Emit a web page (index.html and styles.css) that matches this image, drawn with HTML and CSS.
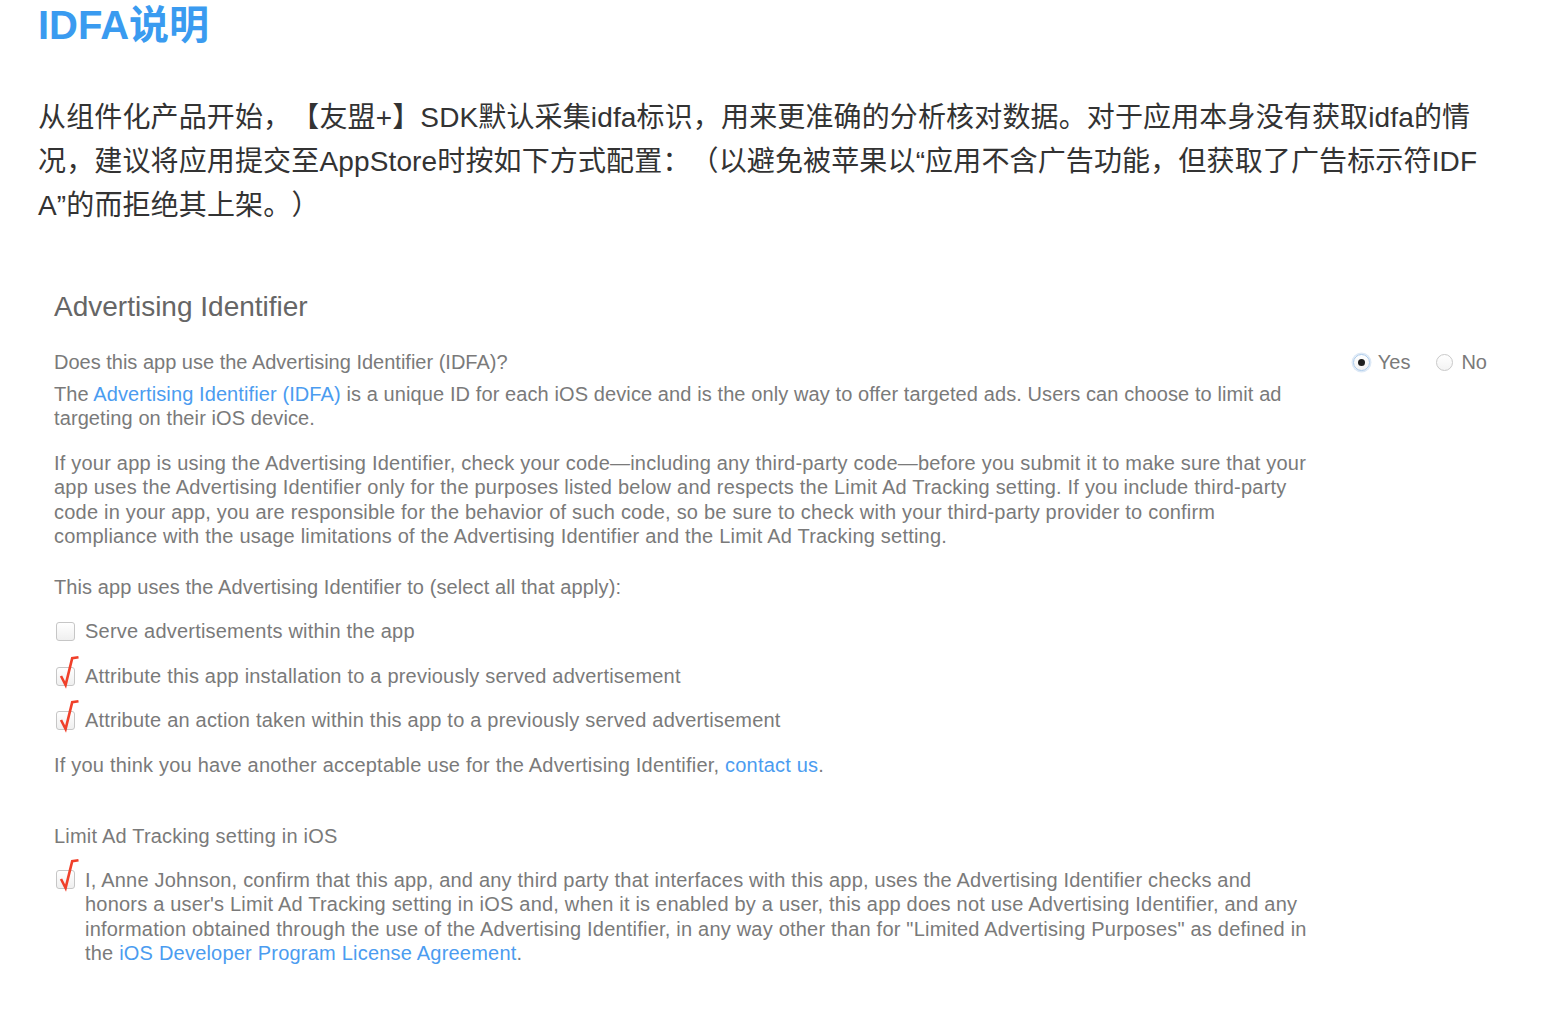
FILE: index.html
```html
<!DOCTYPE html>
<html lang="zh-CN">
<head>
<meta charset="utf-8">
<title>IDFA说明</title>
<link rel="stylesheet" href="styles.css">
</head>
<body>
<div class="page">
  <h1 class="title">IDFA说明</h1>
  <p class="intro">从组件化产品开始，【友盟+】SDK默认采集idfa标识，用来更准确的分析核对数据。对于应用本身没有获取idfa的情<br>况，建议将应用提交至AppStore时按如下方式配置：（以避免被苹果以“应用不含广告功能，但获取了广告标示符IDF<br>A”的而拒绝其上架。）</p>

  <div class="shot">
    <h2 class="shot-title">Advertising Identifier</h2>

    <div class="question-row">
      <div class="line question">Does this app use the Advertising Identifier (IDFA)?</div>
      <div class="radios">
        <span class="radio radio-on"><span class="dot"></span></span>
        <span class="radio-label">Yes</span>
        <span class="radio radio-off"></span>
        <span class="radio-label">No</span>
      </div>
    </div>

    <div class="block desc">The <span class="link">Advertising Identifier (IDFA)</span> is a unique ID for each iOS device and is the only way to offer targeted ads. Users can choose to limit ad<br>targeting on their iOS device.</div>

    <div class="block para2">If your app is using the Advertising Identifier, check your code—including any third-party code—before you submit it to make sure that your<br>app uses the Advertising Identifier only for the purposes listed below and respects the Limit Ad Tracking setting. If you include third-party<br>code in your app, you are responsible for the behavior of such code, so be sure to check with your third-party provider to confirm<br>compliance with the usage limitations of the Advertising Identifier and the Limit Ad Tracking setting.</div>

    <div class="line select">This app uses the Advertising Identifier to (select all that apply):</div>

    <div class="check-row row1">
      <span class="box"></span>
      <span class="check-text">Serve advertisements within the app</span>
    </div>
    <div class="check-row row2">
      <span class="box"><svg class="tick" viewBox="0 0 24 34" width="24" height="34"><path d="M4 22 L8.6 31 L15.2 4.2 L21.5 3.2"/></svg></span>
      <span class="check-text">Attribute this app installation to a previously served advertisement</span>
    </div>
    <div class="check-row row3">
      <span class="box"><svg class="tick" viewBox="0 0 24 34" width="24" height="34"><path d="M4 22 L8.6 31 L15.2 4.2 L21.5 3.2"/></svg></span>
      <span class="check-text">Attribute an action taken within this app to a previously served advertisement</span>
    </div>

    <div class="line other">If you think you have another acceptable use for the Advertising Identifier, <span class="link">contact us</span>.</div>

    <div class="line limit">Limit Ad Tracking setting in iOS</div>

    <div class="check-row confirm">
      <span class="box"><svg class="tick" viewBox="0 0 24 34" width="24" height="34"><path d="M4 22 L8.6 31 L15.2 4.2 L21.5 3.2"/></svg></span>
      <span class="check-text multi">I, Anne Johnson, confirm that this app, and any third party that interfaces with this app, uses the Advertising Identifier checks and<br>honors a user's Limit Ad Tracking setting in iOS and, when it is enabled by a user, this app does not use Advertising Identifier, and any<br>information obtained through the use of the Advertising Identifier, in any way other than for "Limited Advertising Purposes" as defined in<br>the <span class="link">iOS Developer Program License Agreement</span>.</span>
    </div>
  </div>
</div>
</body>
</html>
```

FILE: styles.css
```css
html, body {
  margin: 0;
  padding: 0;
  background: #ffffff;
}

.page {
  padding: 0 38px;
  font-family: "Liberation Sans", "Noto Sans CJK SC", sans-serif;
}

.title {
  margin: 0;
  font-size: 40px;
  line-height: 50px;
  font-weight: bold;
  color: #3a9bf0;
  white-space: nowrap;
}

.intro {
  margin: 46px 0 0;
  font-size: 28px;
  line-height: 44px;
  color: #333333;
  letter-spacing: 0.14px;
  white-space: nowrap;
  text-spacing-trim: space-all;
}

.shot {
  padding: 0 16px;
  color: #7a7a7a;
  font-size: 20px;
  line-height: 24px;
  letter-spacing: 0.21px;
  white-space: nowrap;
}

.shot-title {
  margin: 63px 0 0;
  font-size: 28px;
  line-height: 32px;
  font-weight: normal;
  color: #666666;
  letter-spacing: 0;
}

.question {
  letter-spacing: 0;
}

.link {
  color: #4b9cf0;
}

.question-row {
  margin-top: 27px;
  display: flex;
  align-items: center;
  justify-content: space-between;
}

.radios {
  display: flex;
  align-items: center;
  padding-right: 1px;
  letter-spacing: 0;
}

.radio {
  width: 17px;
  height: 17px;
  border-radius: 50%;
  box-sizing: border-box;
  display: flex;
  align-items: center;
  justify-content: center;
  background: linear-gradient(#ffffff, #f3f3f3);
}

.radio-on {
  border: 1px solid #a9c9ea;
  box-shadow: 0 0 0 1.5px #dde9f6;
}

.radio-off {
  border: 1px solid #c9c9c9;
  margin-left: 26px;
}

.dot {
  width: 7px;
  height: 7px;
  border-radius: 50%;
  background: #1e1e1e;
}

.radio-label {
  margin-left: 8px;
}

.desc {
  margin-top: 8px;
  letter-spacing: 0.1px;
}

.para2 {
  margin-top: 21px;
  line-height: 24.3px;
}

.select {
  margin-top: 27px;
  letter-spacing: 0.1px;
}

.check-row {
  display: flex;
  align-items: center;
}

.row1 { margin-top: 20px; }
.row2 { margin-top: 21px; }
.row3 { margin-top: 20px; }

.box {
  position: relative;
  flex: none;
  width: 19px;
  height: 19px;
  margin-left: 2px;
  margin-right: 10px;
  box-sizing: border-box;
  border: 1px solid #c6c6c6;
  border-radius: 3px;
  background: linear-gradient(#ffffff, #efefef);
}

.tick {
  position: absolute;
  left: 0;
  top: -14px;
  overflow: visible;
}

.tick path {
  fill: none;
  stroke: #f0402a;
  stroke-width: 2.6;
  stroke-linejoin: miter;
  stroke-linecap: butt;
}

.other {
  margin-top: 21px;
}

.limit {
  margin-top: 47px;
}

.confirm {
  margin-top: 20px;
  align-items: flex-start;
}

.confirm .box {
  margin-top: 2px;
}

.multi {
  line-height: 24.3px;
}
```
